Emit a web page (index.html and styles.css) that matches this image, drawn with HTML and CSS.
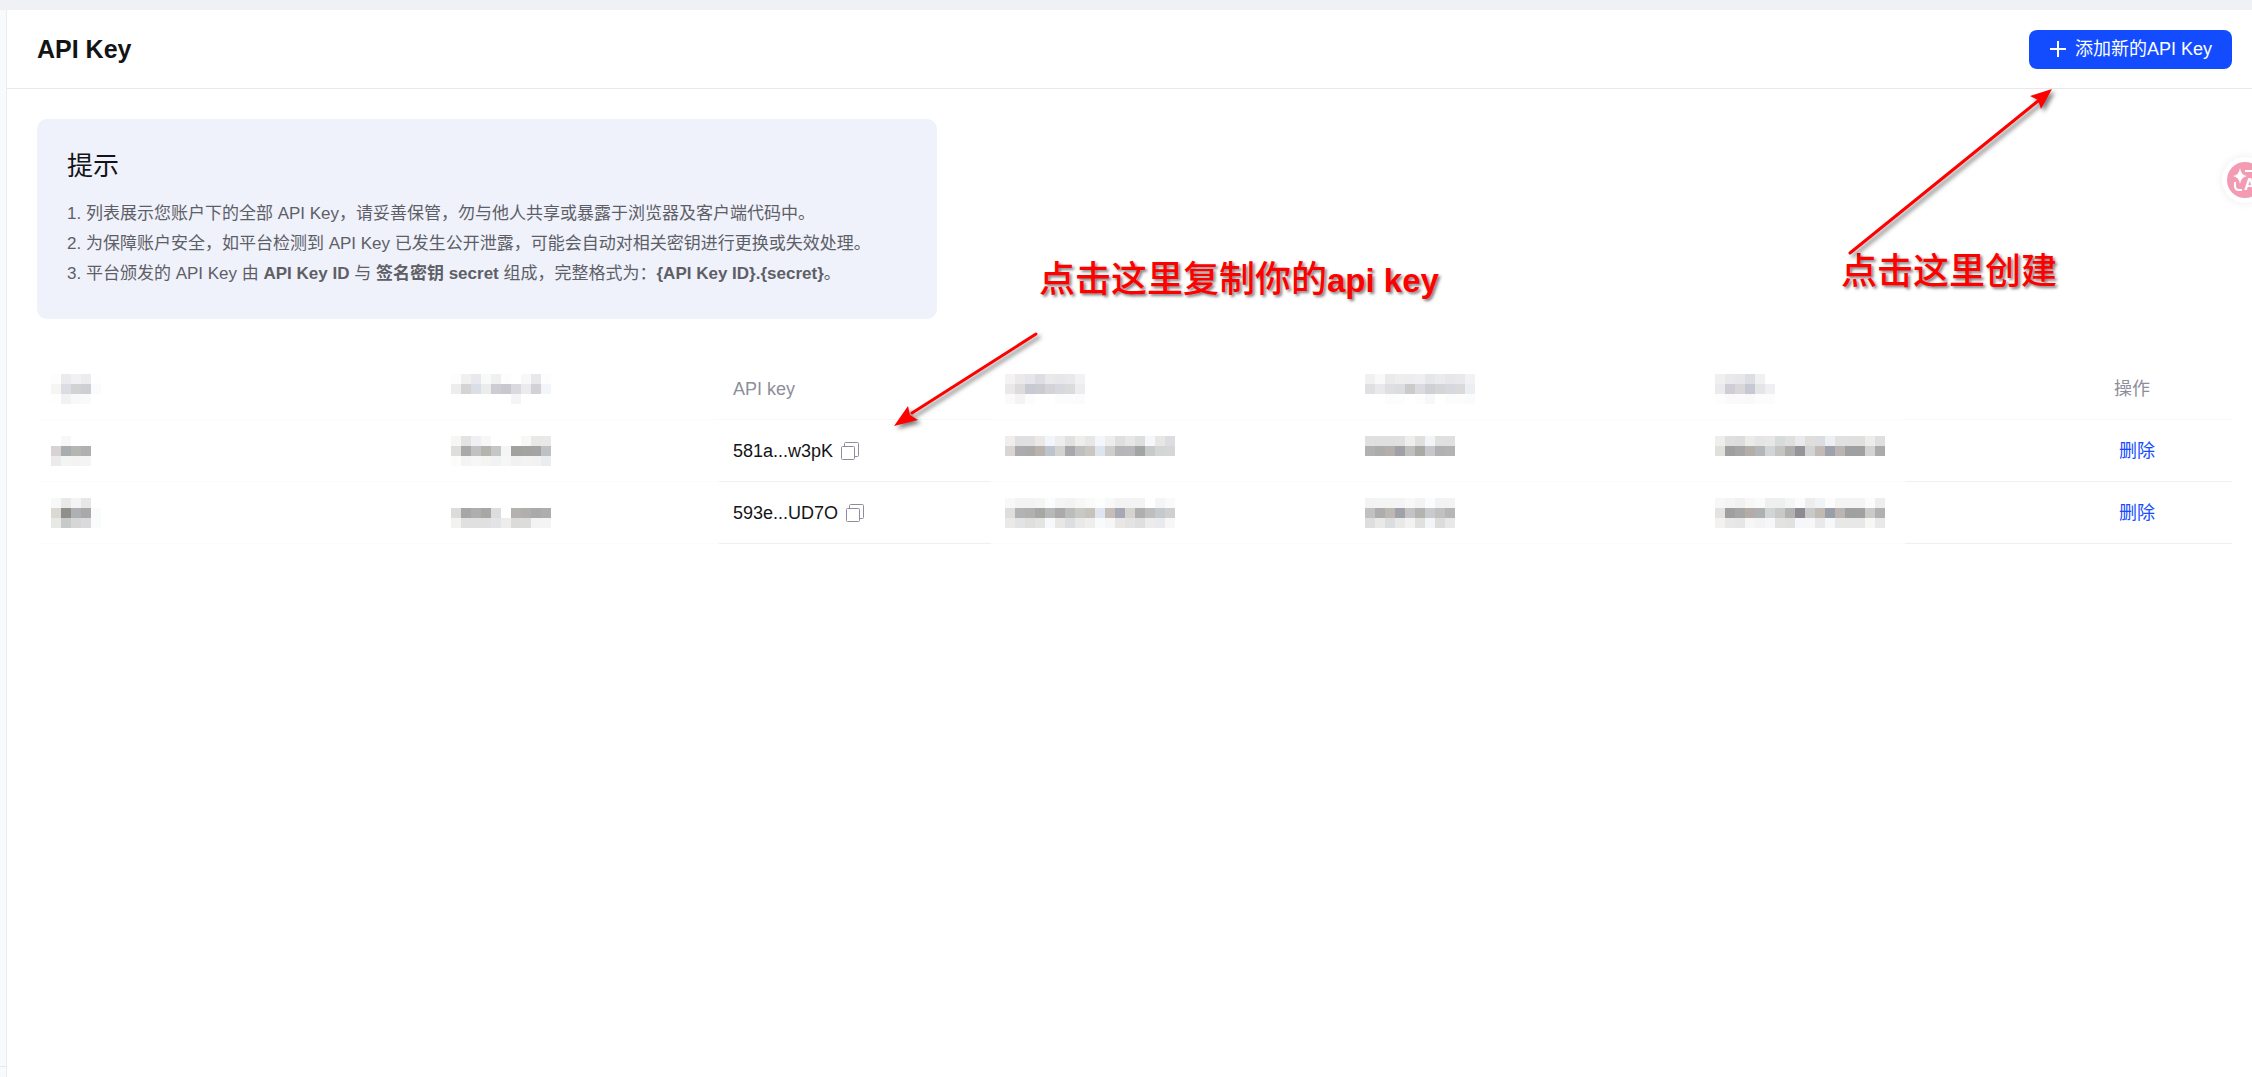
FILE: index.html
```html
<!DOCTYPE html>
<html lang="zh-CN">
    <head>
        <meta charset="utf-8">
        <title>API Key</title>
        <link rel="stylesheet" href="styles.css">
    </head>
    <body>
        <div class="layout">
            <aside class="sidebar"></aside>
            <main class="content">
                <header class="page-header">
                    <h1>API Key</h1>
                    <button type="button" class="btn-add">
                        <svg width="18" height="18" viewBox="0 0 18 18" fill="none" stroke="currentColor" stroke-width="2"><path d="M9 1v16M1 9h16"/></svg>
                        添加新的API Key
                    </button>
                </header>

                <div class="page-body">
                    <section class="tips">
                        <h2>提示</h2>
                        <ol>
                            <li>列表展示您账户下的全部 API Key，请妥善保管，勿与他人共享或暴露于浏览器及客户端代码中。</li>
                            <li>为保障账户安全，如平台检测到 API Key 已发生公开泄露，可能会自动对相关密钥进行更换或失效处理。</li>
                            <li>平台颁发的 API Key 由 <b>API Key ID</b> 与 <b>签名密钥 secret</b> 组成，完整格式为：<b>{API Key ID}.{secret}</b>。</li>
                        </ol>
                    </section>

                    <table class="keys">
                        <colgroup>
                            <col class="col-name">
                            <col class="col-owner">
                            <col class="col-key">
                            <col class="col-created">
                            <col class="col-used">
                            <col class="col-time">
                            <col class="col-action">
                        </colgroup>
                        <thead>
                            <tr>
                                <th class="masked" data-cells="fdfdfb ebebee f1f1f4 ececef fdfefe|f6f5f4 dcdde4 d2d2d4 cfced5 fafbfd|fefefc f2f2f3 f7f9f9 f9fafa -"></th>
                                <th class="masked" data-cells="fdfdfd f0f0f1 e7e9ee f8f9f9 f0f0f2 fdfdfd - f8f8f8 e8e8ea fdfdfd|ededee d4d4d5 d9dee7 ebecec ccccd2 c9c8cf d9d9df ebebed d2d1d5 f2f6fa|- - - - - - f4f6f6 - - -"></th>
                                <th>API key</th>
                                <th class="masked" data-cells="f3f3f4 ebe9ea e5e6eb dddde3 e9e9ec e7e7ea e9e9eb f2f2f4|e9e9ea dddbdc c8cad3 cbcbd1 d4d4d6 d7d7df dbdbde ededf0|fafafa f4f4f5 fcfcfd - - fcfcfd fcfcfd fafbfd"></th>
                                <th class="masked" data-cells="f1f1f2 f9f9f9 e9eaec eeeeef ecedef efeff1 e6e7e9 ebebed e7e7ea e9e9ec f2f2f5|e0e0e2 e9e9eb dfdfe1 dcdde1 cbcbcc dadae1 cfd0d6 d5d5d7 d7d7df dadadd edeef2|- - fcfcfd fdfdfd - fdfdfd f8f8f9 - fcfcfd fcfcfd f9fbfd"></th>
                                <th class="masked" data-cells="f0f0f1 e9e9ec e7e7ea dddee3 f1f1f2 -|ebebee cfced6 dad7db c7c9d2 e5e5e5 efeff4|fcfdfd fafafa fafafb f9f9f9 fbfdfc fcfcfd"></th>
                                <th class="action">操作</th>
                            </tr>
                        </thead>
                        <tbody>
                            <tr>
                                <td class="masked" data-cells="- f7f9f8 - -|d8d3d2 a9adb0 b6b6b0 b0b0b2|eceaea f4f4f4 f3f3f3 f4f4f4"></td>
                                <td class="masked" data-cells="f6f6f5 e3e3e3 eff0f3 f6f8f7 - - - f8f8f6 e8e8e7 e9e9e7|dededd a9a9a9 c2c2c3 b4b3ad c4c6c8 f5f5f5 a1a19d a4a3a1 a4a4a5 c0c1c5|fcfcfa f4f4f4 f6f8f7 f4f5f2 f1f3f3 f6f6f6 f1f1f1 f3f3f3 f4f2f0 ebecee"></td>
                                <td>
                                    <div class="key">581a...w3pK
                                        <button type="button" class="btn-copy" aria-label="复制">
                                            <svg width="18" height="18" viewBox="0 0 18 18" fill="none" stroke="currentColor" stroke-width="1"><rect x="0.500" y="4.500" width="13" height="13" rx="1"/><path d="M3.500 4V1.500a1 1 0 0 1 1-1H16.500a1 1 0 0 1 1 1V13.500a1 1 0 0 1-1 1H14"/></svg>
                                        </button>
                                    </div>
                                </td>
                                <td class="masked" data-cells="efeeed dfdfdf e0e0e0 ebe9e7 f2f5fa ededed e1e1e1 eeeeed e7e7e7 f4f6fb ededed dfdfdf e8e7e6 dededf f5f7fb e8e7e5 dcdde0|d8d5d3 acacae aaaaaa b9b2ad bdc4cd d3d3cf a8a8ac bfbfbf cbc7c0 dde4ed d0cecd b5b6b9 b7b6b8 a2a5a3 c8cac9 d4d6d6 d6d6d6|- - - - - - - - - - - - - - - - -"></td>
                                <td class="masked" data-cells="e0e0e0 dfdfdf dfdfdf e0e0e0 efeeec dfdfdf f2f4f7 e0e0e0 e0e0e0|b2b1b0 acacac b3aeab a0a1a8 bfbfc0 a9aaa6 c6c7ca b1b1b1 b3b3b3|- - - - - - - - -"></td>
                                <td class="masked" data-cells="eeeeec dfdfdf dddddd ebebea e5e5e5 e7e7e7 d8dbdb dfdfdf e8eaed e0dedc dcdde0 edeff3 e1e1e1 e0e0e0 e0e0e0 ededec dfdfdf|e1e1dc 9f9f9f a5a5a5 b3aea7 b5b6b9 d0d5d8 c6c4c2 aeafac 969499 d2d3d5 c3bab5 9fa2ac bab5b3 9fa0a1 9fa09f d1d4d0 ababab|- - - - - - - - - - - - - - - - -"></td>
                                <td class="action"><button type="button" class="btn-delete">删除</button></td>
                            </tr>
                            <tr>
                                <td class="masked" data-cells="f8f8f8 e8e9e8 f4f4f4 e7e7e7 -|dcd9d4 8f8f8c adb0b5 aaa9aa fafbfd|e8e8e6 c8cac9 d6d6d6 dadada fafbfd"></td>
                                <td class="masked" data-cells="- - - - - - - - - -|dcdcdb a7a7a5 aeaeae a7a7a6 dcdddf - b3b2ae b0afad aaaaaa aeaeb0|f2f2f1 e0e0e0 e0e0e0 e0e0e0 e3e4e8 ededec dbdbda dcdcdb f3f3f3 f4f4f4"></td>
                                <td>
                                    <div class="key">593e...UD7O
                                        <button type="button" class="btn-copy" aria-label="复制">
                                            <svg width="18" height="18" viewBox="0 0 18 18" fill="none" stroke="currentColor" stroke-width="1"><rect x="0.500" y="4.500" width="13" height="13" rx="1"/><path d="M3.500 4V1.500a1 1 0 0 1 1-1H16.500a1 1 0 0 1 1 1V13.500a1 1 0 0 1-1 1H14"/></svg>
                                        </button>
                                    </div>
                                </td>
                                <td class="masked" data-cells="f8f8f8 f3f3f3 f3f3f3 f5f5f5 fbfcfd f5f5f5 f3f3f4 f7f7f7 fafafa fcfdfd f8f8f8 f3f3f3 f3f3f3 f3f3f3 - f5f5f5 fafafa|dfdedd b2b3b5 b2b1b0 a7a8a4 b8b8b8 aaaaaa bcbcbc c8c8c7 c7c3bb dfe5ee c5bdb8 a6a9b3 d6d2cf aeafaf c0bdbe c4c9cd cecfce|ebe9e8 e2e3e4 dfdfde e4e4e2 f6f8fb e8e7e5 dcdee1 e9e9e8 efeeec f9fafc f6f6f6 e8e7e6 e3e3e3 dfdfe0 ececec e8eaee f7f7f5"></td>
                                <td class="masked" data-cells="f3f3f3 f4f4f4 f4f4f4 f4f4f4 f8f8f8 f3f3f3 fbfcfe f3f3f3 f3f3f3|c1c1c0 adadae bdb9b2 a0a2aa c3c3c6 b3b3b0 c9cacd c1c1bf b6b6b6|dedede e9e9e8 dbdde0 e9e9e8 f3f2f0 e0e0de f2f4f7 dcdcdc e8e8e8"></td>
                                <td class="masked" data-cells="f7f7f7 f4f4f4 f1f1f1 f7f7f7 f9fafa efefef eeefef f5f5f5 fafbfb ededed f2f3f5 fcfcfd f4f4f4 f4f4f4 f4f4f4 fbfcfb eeeeee|e3e3e1 9f9f9f a6a6a6 b4aca7 aeb0b1 d1d5d5 c9c9c9 b2b2b0 8d8b91 c9c9ca c0bab3 9a9ea9 bab5b3 9fa0a1 a0a1a0 c9cbc8 b1b1b1|f3f2f0 e8e8e8 e6e6e6 f6f6f6 f3f3f3 f6f7f9 e3e3e1 e1e1e1 f5f7fa f6f7f9 e9e9e9 f6f7f8 e8e8e7 e8e8e7 e8e8e8 f7f7f5 e9e9e9"></td>
                                <td class="action"><button type="button" class="btn-delete">删除</button></td>
                            </tr>
                        </tbody>
                    </table>
                </div>

                <!-- notes over the page -->
                <p class="note note-copy">点击这里复制你的<span>api key</span></p>
                <svg class="arrow arrow-copy" width="160" height="110" viewBox="0 0 160 110">
                    <path class="shaft" d="M146 13L22 92"/>
                    <path class="head" d="M4 105L18 85L20 94L28 99Z"/>
                </svg>
                <p class="note note-create">点击这里创建</p>
                <svg class="arrow arrow-create" width="220" height="180" viewBox="0 0 220 180">
                    <path class="shaft" d="M10 169L198 17"/>
                    <path class="head" d="M212 5L190 12L198 16L201 25Z"/>
                </svg>
                <button type="button" class="translate" aria-label="翻译">
                    <svg width="36" height="36" viewBox="0 0 36 36">
                        <circle cx="18" cy="18" r="18" fill="#f49bb4"/>
                        <path d="M13 6Q14 13 20 14Q14 15 13 22Q12 15 6 14Q12 13 13 6Z" fill="#fff"/>
                        <path d="M18 9H24Q28 9 28 13M8 20V24Q8 28 12 28H15" fill="none" stroke="#fff" stroke-width="2"/>
                        <text x="17" y="28" fill="#fff">A</text>
                    </svg>
                </button>
            </main>
        </div>

        <script src="mask.js"></script>
    </body>
</html>
```

FILE: styles.css
```css
* {
  box-sizing: border-box;
}

body {
  margin: 0;
  background: #f0f1f5;
  color: #131417;
  font-family: "Liberation Sans", "Noto Sans CJK SC", sans-serif;
  font-size: 18px;
  line-height: 24px;
}

h1, h2, ol, p {
  margin: 0;
  padding: 0;
}

button {
  border: 0;
  padding: 0;
  background: none;
  font: inherit;
  cursor: pointer;
}

.layout {
  display: flex;
  min-height: 100vh;
  padding-top: 10px;
}

.sidebar {
  display: flex;
  flex: 0 0 7px;
  align-items: flex-end;
  padding-bottom: 10px;
  border-right: 1px solid #ebecee;
  background: #f9fafc;
}

.sidebar::after {
  content: "";
  flex: 1;
  height: 1px;
  background: #e6e7ea;
}

.content {
  position: relative;
  flex: 1;
  min-width: 0;
  overflow: hidden;
  background: #fff;
}

.page-header {
  display: flex;
  align-items: center;
  justify-content: space-between;
  padding: 20px 20px 19px 30px;
  border-bottom: 1px solid #e8e8ea;
}

.page-header h1 {
  padding-bottom: 2px;
  font-size: 25px;
  line-height: 30px;
}

.btn-add {
  display: flex;
  align-items: center;
  gap: 8px;
  height: 39px;
  padding: 0 20px 2px;
  border-radius: 8px;
  background: #134cff;
  color: #fff;
}

.page-body {
  padding: 30px 20px 30px 30px;
}

/* Tips */
.tips {
  max-width: 900px;
  padding: 30px;
  border-radius: 10px;
  background: #eff1fb;
}

.tips h2 {
  margin-bottom: 16px;
  font-size: 26px;
  font-weight: normal;
  line-height: 34px;
}

.tips ol {
  color: #5e5f66;
  font-size: 17px;
  line-height: 30px;
  list-style-position: inside;
}

/* Key list */
.keys {
  width: 100%;
  margin-top: 40px;
  border-spacing: 0;
  table-layout: fixed;
}

.col-name { width: 400px; }
.col-owner { width: 282px; }
.col-key { width: 272px; }
.col-created { width: 360px; }
.col-used { width: 350px; }
.col-time { width: 204px; }
.col-action { width: 327px; }

.keys th,
.keys td {
  height: 62px;
  padding: 0 14px;
  border-bottom: 1px solid #f0f0f1;
  text-align: left;
}

.keys th {
  height: 61px;
  border-bottom-color: #f7f7f8;
  color: #8d8e99;
  font-weight: normal;
}

.keys .masked {
  border-bottom-color: #fcfcfc;
}

.masked svg {
  display: block;
}

.keys .action {
  padding-right: 77px;
  text-align: right;
}

.keys th.action {
  padding-right: 82px;
}

.key {
  display: flex;
  align-items: center;
  gap: 8px;
}

.btn-copy {
  display: flex;
  color: #8d8e9b;
}

.btn-delete {
  color: #134cff;
}

/* Notes */
.note {
  position: absolute;
  color: #f00;
  font-size: 36px;
  font-weight: 500;
  line-height: 48px;
  white-space: nowrap;
  text-shadow: 2px 2px 3px rgba(0, 0, 0, 0.5);
}

.note span {
  font-size: 33px;
  font-weight: bold;
}

.note-copy {
  top: 246px;
  left: 1032px;
}

.note-create {
  top: 238px;
  right: 195px;
}

.arrow {
  position: absolute;
  filter: drop-shadow(3px 3px 2px rgba(0, 0, 0, 0.5));
  pointer-events: none;
}

.arrow .shaft {
  stroke: #f00;
  stroke-width: 3;
  stroke-linecap: round;
}

.arrow .head {
  fill: #f00;
}

.arrow-copy {
  top: 311px;
  left: 883px;
}

.arrow-create {
  top: 74px;
  right: 192px;
}

.translate {
  position: absolute;
  top: 147px;
  right: -16px;
  display: flex;
  padding: 5px;
  border-radius: 50%;
  background: #fff;
  box-shadow: 0 0 8px rgba(0, 0, 0, 0.08);
}

.translate text {
  font-size: 16px;
  font-weight: bold;
}
```

FILE: mask.js
```javascript
// Fills the masked cells with 10px blocks, rows split by "|", "-" is an empty block
const BLOCK = 10;
const NS = "http://www.w3.org/2000/svg";

document.querySelectorAll("[data-cells]").forEach((cell) => {
    const rows = cell.dataset.cells.split("|").map((row) => row.split(" "));
    const svg = document.createElementNS(NS, "svg");
    svg.setAttribute("width", rows[0].length * BLOCK);
    svg.setAttribute("height", rows.length * BLOCK);
    svg.setAttribute("shape-rendering", "crispEdges");
    rows.forEach((row, y) => {
        row.forEach((color, x) => {
            if (color == "-") return;
            const rect = document.createElementNS(NS, "rect");
            rect.setAttribute("x", x * BLOCK);
            rect.setAttribute("y", y * BLOCK);
            rect.setAttribute("width", BLOCK);
            rect.setAttribute("height", BLOCK);
            rect.setAttribute("fill", "#" + color);
            svg.appendChild(rect);
        });
    });
    cell.appendChild(svg);
});
```
